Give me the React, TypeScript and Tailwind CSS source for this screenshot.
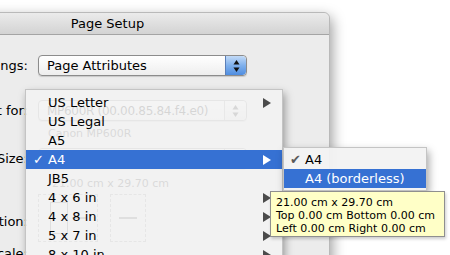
const font = "font-['DejaVu_Sans','Liberation_Sans',sans-serif]";

const Arrow = ({ white }: { white?: boolean }) => (
  <svg width="8" height="10" viewBox="0 0 8 10" className="shrink-0">
    <polygon points="0,0 8,5 0,10" fill={white ? '#ffffff' : '#4b4b4b'} />
  </svg>
);

const Stepper = ({ faint }: { faint?: boolean }) => (
  <div
    className={
      faint
        ? 'flex w-[22px] flex-col items-center justify-center rounded-r-[4px] border-l border-[#9a9a9a] bg-gradient-to-b from-[#ffffff] to-[#e2e2e2]'
        : 'flex w-[21px] flex-col items-center justify-center rounded-r-[4px] border-l border-[#5a7fb8] bg-gradient-to-b from-[#c3dbf7] via-[#7fb0ec] to-[#4f8de0]'
    }
  >
    <svg width="7" height="14" viewBox="0 0 7 14">
      <polygon points="3.5,1 6.5,5.5 0.5,5.5" fill="#111" />
      <polygon points="0.5,8.5 6.5,8.5 3.5,13" fill="#111" />
    </svg>
  </div>
);

const Popup = ({ label, faint }: { label: string; faint?: boolean }) => (
  <div className="flex h-[21px] w-[209px] overflow-hidden rounded-[4px] border border-[#8c8c8c] bg-gradient-to-b from-[#ffffff] to-[#eeeeee] shadow-[0_1px_1px_rgba(0,0,0,0.15)]">
    <div
      className={
        'flex flex-1 items-center overflow-hidden whitespace-nowrap pl-[8px] text-black ' +
        (faint ? 'text-[12px] tracking-[-0.3px]' : 'text-[13px]')
      }
    >
      {label}
    </div>
    <Stepper faint={faint} />
  </div>
);

const Row = ({ label, children, className }: { label: string; children?: React.ReactNode; className?: string }) => (
  <div className={'flex items-center gap-[10px] ' + (className ?? '')}>
    <div className="w-[142px] whitespace-nowrap text-right text-[13px] text-black">{label}</div>
    {children}
  </div>
);

const items: { name: string; sub?: boolean; active?: boolean }[] = [
  { name: 'US Letter', sub: true },
  { name: 'US Legal' },
  { name: 'A5' },
  { name: 'A4', sub: true, active: true },
  { name: 'JB5' },
  { name: '4 x 6 in', sub: true },
  { name: '4 x 8 in', sub: true },
  { name: '5 x 7 in', sub: true },
  { name: '8 x 10 in', sub: true },
];

export default function App() {
  return (
    <div className={'relative h-[255px] w-[450px] overflow-hidden bg-white pt-[12px] ' + font}>
      {/* dialog window */}
      <div className="ml-[-115px] h-[260px] w-[445px] rounded-t-[6px] border border-[#b9b9b9] bg-[#ececec] shadow-[2px_5px_14px_rgba(0,0,0,0.4)]">
        <div className="flex h-[22px] items-center justify-center rounded-t-[6px] border-b border-[#a4a4a4] bg-gradient-to-b from-[#ebebeb] to-[#d3d3d3] text-[13px] text-black">
          Page Setup
        </div>
        <div className="pt-[20px]">
          <Row label="Settings:">
            <Popup label="Page Attributes" />
          </Row>
          <Row label="Format for:" className="mt-[24px]">
            <Popup label="MP600R (00.00.85.84.f4.e0)" faint />
          </Row>
          <div className="ml-[162px] mt-[6px] text-[11px] leading-[13px] text-[#222]">Canon MP600R</div>
          <Row label="Paper Size:" className="mt-[8px]">
            <Popup label="A4" faint />
          </Row>
          <div className="ml-[166px] mt-[8px] text-[11px] leading-[13px] text-[#222]">21.00 cm x 29.70 cm</div>
          <div className="mt-[4px] flex items-center gap-[10px]">
            <div className="w-[142px] pt-[8px] text-right text-[13px] text-black">Orientation:</div>
            <div className="flex gap-[12px]">
              <div className="flex h-[48px] w-[60px] items-center justify-center gap-[4px] border border-dashed border-[#888]">
                <div className="h-[32px] w-[18px] border border-[#555]" />
                <div className="h-[2px] w-[14px] bg-[#555]" />
              </div>
              <div className="flex h-[48px] w-[36px] items-center justify-center border border-dashed border-[#888]">
                <div className="h-[2px] w-[18px] bg-[#555]" />
              </div>
            </div>
          </div>
          <Row label="Scale:" className="mt-[2px]" />
        </div>
      </div>

      {/* open popup menu */}
      <div className="absolute left-[25px] top-[89px] h-[190px] w-[258px] border border-[#c4c4c4] bg-[rgba(243,243,243,0.88)] py-[3px] shadow-[2px_4px_8px_rgba(0,0,0,0.35)]">
        {items.map((it) => (
          <div
            key={it.name}
            className={
              'flex h-[19px] items-center pr-[11px] text-[13px] ' +
              (it.active ? 'bg-[#3671d3] text-white' : 'text-black')
            }
          >
            <div className="w-[22px] pl-[7px] text-[13px]">{it.active ? '✓' : ''}</div>
            <div className="flex-1">{it.name}</div>
            {it.sub && <Arrow white={it.active} />}
          </div>
        ))}
      </div>

      {/* submenu */}
      <div className="absolute left-[283px] top-[147px] w-[144px] border border-[#c4c4c4] bg-[rgba(243,243,243,0.96)] py-[2px] shadow-[2px_4px_8px_rgba(0,0,0,0.35)]">
        <div className="flex h-[19px] items-center text-[13px] text-black">
          <div className="w-[21px] pl-[6px] text-[13px] text-[#5a5a5a]">✔</div>
          <div>A4</div>
        </div>
        <div className="flex h-[19px] items-center bg-[#3671d3] text-[13px] text-white">
          <div className="w-[21px]" />
          <div>A4 (borderless)</div>
        </div>
      </div>

      {/* tooltip */}
      <div className="absolute left-[270px] top-[191px] h-[46px] w-[175px] border border-[#8f8f8f] bg-[#ffffc7] px-[5px] pt-[4px] text-[11px] leading-[13px] text-black shadow-[1px_2px_3px_rgba(0,0,0,0.2)]">
        <div>21.00 cm x 29.70 cm</div>
        <div>Top 0.00 cm Bottom 0.00 cm</div>
        <div>Left 0.00 cm Right 0.00 cm</div>
      </div>
    </div>
  );
}
